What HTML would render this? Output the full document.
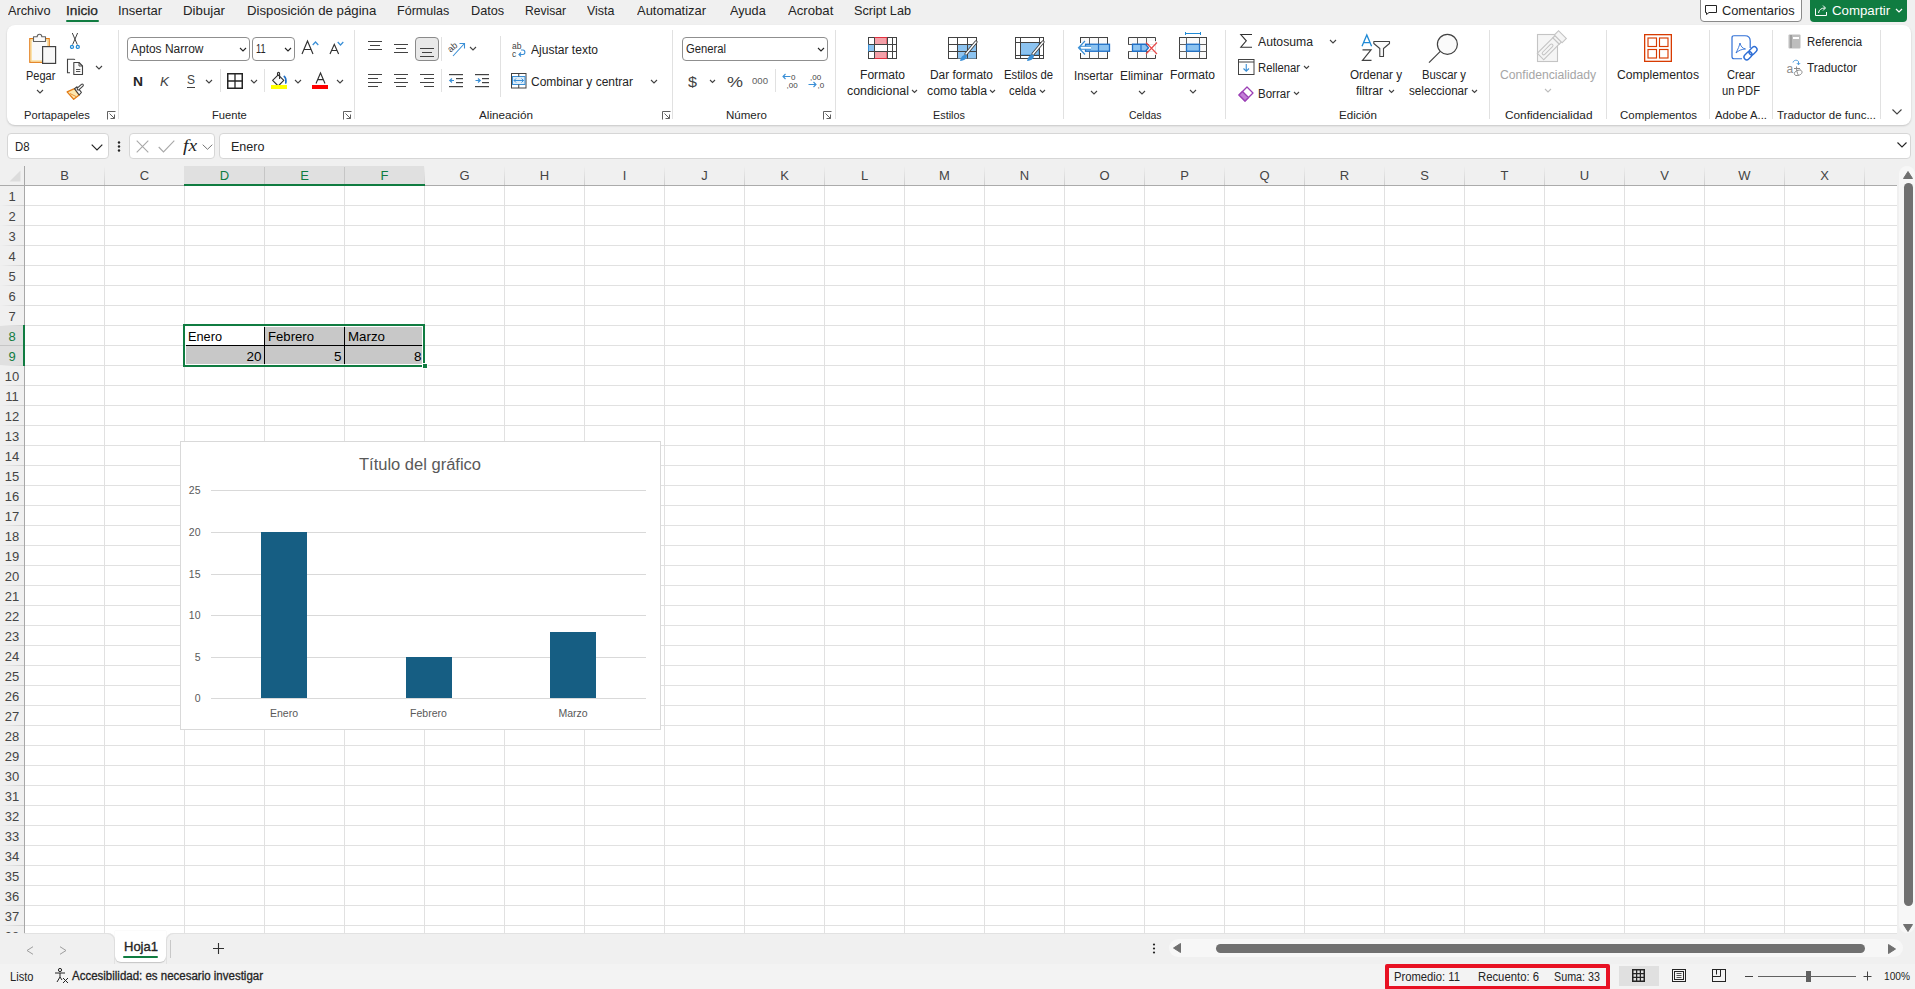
<!DOCTYPE html>
<html><head><meta charset="utf-8"><title>Excel</title>
<style>

*{margin:0;padding:0;box-sizing:border-box}
html,body{width:1915px;height:989px;overflow:hidden;background:#f0f0f0;font-family:"Liberation Sans",sans-serif;position:relative}
.t{position:absolute;white-space:nowrap;line-height:1;transform-origin:0 0}
.a{position:absolute}
svg{position:absolute;overflow:visible}

</style></head><body>
<div class="a" style="left:66px;top:20px;width:33px;height:2px;background:#107c41;border-radius:1px"></div>
<div class="a" style="left:1700px;top:-5px;width:102px;height:27px;background:#fff;border:1px solid #8a8a8a;border-radius:4px"></div>
<svg style="left:1705px;top:5px" width="12" height="10" viewBox="0 0 12 10"><path d="M0.5 0.5 H11.5 V7.5 H4 L1.5 9.5 V7.5 H0.5 Z" fill="none" stroke="#242424" stroke-width="1"/></svg>
<div class="a" style="left:1810px;top:-5px;width:97px;height:27px;background:#107c41;border-radius:4px"></div>
<svg style="left:1815px;top:4px" width="13" height="12" viewBox="0 0 13 12"><path d="M0.5 4.5 V11.5 H11.5 V8" fill="none" stroke="#fff" stroke-width="1"/><path d="M3.5 9 C4 5.5 6.5 4 10 4 M8 1.5 L10.5 4 L8 6.5" fill="none" stroke="#fff" stroke-width="1"/></svg>
<svg style="left:1895.0px;top:8.0px" width="8" height="5.0" viewBox="0 0 8 5.0"><path d="M1 1 L4.0 4.0 L7 1" fill="none" stroke="#fff" stroke-width="1.2"/></svg>
<div class="a" style="left:7px;top:25px;width:1904px;height:100px;background:#fff;border-radius:8px;box-shadow:0 1px 2px rgba(0,0,0,0.18)"></div>
<div class="a" style="left:118px;top:30px;width:1px;height:89px;background:#e1e1e1"></div>
<div class="a" style="left:354px;top:30px;width:1px;height:89px;background:#e1e1e1"></div>
<div class="a" style="left:672px;top:30px;width:1px;height:89px;background:#e1e1e1"></div>
<div class="a" style="left:835px;top:30px;width:1px;height:89px;background:#e1e1e1"></div>
<div class="a" style="left:1063px;top:30px;width:1px;height:89px;background:#e1e1e1"></div>
<div class="a" style="left:1225px;top:30px;width:1px;height:89px;background:#e1e1e1"></div>
<div class="a" style="left:1489px;top:30px;width:1px;height:89px;background:#e1e1e1"></div>
<div class="a" style="left:1606px;top:30px;width:1px;height:89px;background:#e1e1e1"></div>
<div class="a" style="left:1709px;top:30px;width:1px;height:89px;background:#e1e1e1"></div>
<div class="a" style="left:1772px;top:30px;width:1px;height:89px;background:#e1e1e1"></div>
<div class="a" style="left:1880px;top:30px;width:1px;height:89px;background:#e1e1e1"></div>
<svg style="left:107px;top:111px" width="9" height="9" viewBox="0 0 9 9"><path d="M0.5 8.5 V0.5 H8.5" fill="none" stroke="#616161" stroke-width="1"/><path d="M2.5 2.5 L7.5 7.5 M3.5 7.5 H7.5 V3.5" fill="none" stroke="#616161" stroke-width="1"/></svg>
<svg style="left:343px;top:111px" width="9" height="9" viewBox="0 0 9 9"><path d="M0.5 8.5 V0.5 H8.5" fill="none" stroke="#616161" stroke-width="1"/><path d="M2.5 2.5 L7.5 7.5 M3.5 7.5 H7.5 V3.5" fill="none" stroke="#616161" stroke-width="1"/></svg>
<svg style="left:662px;top:111px" width="9" height="9" viewBox="0 0 9 9"><path d="M0.5 8.5 V0.5 H8.5" fill="none" stroke="#616161" stroke-width="1"/><path d="M2.5 2.5 L7.5 7.5 M3.5 7.5 H7.5 V3.5" fill="none" stroke="#616161" stroke-width="1"/></svg>
<svg style="left:823px;top:111px" width="9" height="9" viewBox="0 0 9 9"><path d="M0.5 8.5 V0.5 H8.5" fill="none" stroke="#616161" stroke-width="1"/><path d="M2.5 2.5 L7.5 7.5 M3.5 7.5 H7.5 V3.5" fill="none" stroke="#616161" stroke-width="1"/></svg>
<svg style="left:28px;top:33px" width="30" height="32" viewBox="0 0 30 32">
      <rect x="1.85" y="5.65" width="19.3" height="23.6" fill="#f9f9f9" stroke="#e37c16" stroke-width="1.3"/>
      <rect x="3.1" y="6.9" width="16.8" height="21.1" fill="none" stroke="#fbd98a" stroke-width="1.2"/>
      <path d="M5.5 8.5 V3.7 H9.2 C9.2 0.4 13.8 0.4 13.8 3.7 H17.5 V8.5 Z" fill="#fafafa" stroke="#616161" stroke-width="1.1" stroke-linejoin="round"/>
      <rect x="14.6" y="13.6" width="13" height="16.8" fill="#f8f8f8" stroke="#424242" stroke-width="1.2"/>
    </svg>
<svg style="left:35.5px;top:89.0px" width="8" height="5.0" viewBox="0 0 8 5.0"><path d="M1 1 L4.0 4.0 L7 1" fill="none" stroke="#424242" stroke-width="1.1"/></svg>
<svg style="left:69px;top:32px" width="12" height="18" viewBox="0 0 12 18">
      <path d="M3.3 1 L8.3 12.6 M8.6 1 L3.6 12.6" stroke="#424242" stroke-width="1" fill="none"/>
      <circle cx="3" cy="14.9" r="1.5" fill="none" stroke="#1f8ad6" stroke-width="1.3"/>
      <circle cx="8.8" cy="14.9" r="1.5" fill="none" stroke="#1f8ad6" stroke-width="1.3"/>
    </svg>
<svg style="left:66px;top:58px" width="18" height="18" viewBox="0 0 18 18">
      <path d="M9 1.7 Q8.6 1.2 8 1.2 H1.5 V14.8 H4" fill="none" stroke="#424242" stroke-width="1.1"/>
      <path d="M7.8 4.5 H13 L16.5 8 V16.5 H7.8 Z" fill="#fafafa" stroke="#424242" stroke-width="1.1" stroke-linejoin="round"/>
      <path d="M13 4.5 V8 H16.5" fill="none" stroke="#424242" stroke-width="0.9"/>
      <path d="M10 11.5 H14.3 M10 13.5 H14.3" stroke="#424242" stroke-width="0.9"/>
    </svg>
<svg style="left:94.5px;top:65.0px" width="8" height="5.0" viewBox="0 0 8 5.0"><path d="M1 1 L4.0 4.0 L7 1" fill="none" stroke="#424242" stroke-width="1.1"/></svg>
<svg style="left:66px;top:84px" width="18" height="18" viewBox="0 0 18 18">
      <path d="M1.1 7.9 L8.5 4.7 L13.2 11 L7.7 15.3 Z" fill="#fce7b0" stroke="#e37c16" stroke-width="1.3" stroke-linejoin="round"/>
      <path d="M4 9.5 L10 12.5" stroke="#e37c16" stroke-width="0.8"/>
      <path d="M8.5 4.7 L11 2.8 L15.4 8.3 L13.2 11 Z" fill="#fafafa" stroke="#424242" stroke-width="1.1" stroke-linejoin="round"/>
      <path d="M12.3 4.8 L16.2 1.2" stroke="#424242" stroke-width="3.3" stroke-linecap="round"/>
      <path d="M12.3 4.8 L16.2 1.2" stroke="#fafafa" stroke-width="1.2" stroke-linecap="round"/>
    </svg>
<div class="a" style="left:127px;top:37px;width:123px;height:24px;background:#fff;border:1px solid #8f8f8f;border-radius:4px"></div>
<svg style="left:238.5px;top:47.0px" width="8" height="5.0" viewBox="0 0 8 5.0"><path d="M1 1 L4.0 4.0 L7 1" fill="none" stroke="#242424" stroke-width="1.1"/></svg>
<div class="a" style="left:252px;top:37px;width:43px;height:24px;background:#fff;border:1px solid #8f8f8f;border-radius:4px"></div>
<svg style="left:283.5px;top:47.0px" width="8" height="5.0" viewBox="0 0 8 5.0"><path d="M1 1 L4.0 4.0 L7 1" fill="none" stroke="#242424" stroke-width="1.1"/></svg>
<svg style="left:301px;top:40px" width="13" height="15" viewBox="0 0 13 15"><path d="M1 14 L6.5 1 L12 14 M3.2 9.5 H9.8" fill="none" stroke="#303030" stroke-width="1.15"/></svg>
<svg style="left:312px;top:41px" width="7" height="5" viewBox="0 0 7 5"><path d="M0.7 4 L3.5 1 L6.3 4" fill="none" stroke="#3a8fd6" stroke-width="1.2"/></svg>
<svg style="left:329px;top:43px" width="11" height="12" viewBox="0 0 11 12"><path d="M1 11 L5.3 1.3 L9.6 11 M2.8 7.5 H7.8" fill="none" stroke="#303030" stroke-width="1.15"/></svg>
<svg style="left:337px;top:41px" width="7" height="5" viewBox="0 0 7 5"><path d="M0.7 1 L3.5 4 L6.3 1" fill="none" stroke="#3a8fd6" stroke-width="1.2"/></svg>
<div class="a" style="left:187px;top:87px;width:8px;height:1px;background:#424242"></div>
<svg style="left:205.0px;top:78.5px" width="8" height="5.0" viewBox="0 0 8 5.0"><path d="M1 1 L4.0 4.0 L7 1" fill="none" stroke="#424242" stroke-width="1.1"/></svg>
<div class="a" style="left:220px;top:69px;width:1px;height:23px;background:#e1e1e1"></div>
<svg style="left:227px;top:73px" width="16" height="16" viewBox="0 0 16 16"><rect x="0.75" y="0.75" width="14.5" height="14.5" fill="none" stroke="#242424" stroke-width="1.5"/><path d="M8 0.5 V15.5 M0.5 8 H15.5" stroke="#242424" stroke-width="1.3"/></svg>
<svg style="left:249.5px;top:78.5px" width="8" height="5.0" viewBox="0 0 8 5.0"><path d="M1 1 L4.0 4.0 L7 1" fill="none" stroke="#424242" stroke-width="1.1"/></svg>
<div class="a" style="left:264px;top:69px;width:1px;height:23px;background:#e1e1e1"></div>
<svg style="left:271px;top:71px" width="17" height="19" viewBox="0 0 17 19">
      <path d="M1.6 9.4 L7.2 3.8 L12.8 9.4 L7.2 15 Z" fill="#fafafa" stroke="#303030" stroke-width="1.1" stroke-linejoin="round"/>
      <path d="M6.5 4.5 V2.5 C6.5 1 8.6 1 8.6 2.5 V8" fill="none" stroke="#303030" stroke-width="1.1"/>
      <path d="M13.3 5.5 C14.6 6.5 15.2 8.5 14.8 12" fill="none" stroke="#1f6fc6" stroke-width="1.7" stroke-linecap="round"/>
      <rect x="0" y="14" width="16" height="4" fill="#ffff00"/>
    </svg>
<svg style="left:294.0px;top:78.5px" width="8" height="5.0" viewBox="0 0 8 5.0"><path d="M1 1 L4.0 4.0 L7 1" fill="none" stroke="#424242" stroke-width="1.1"/></svg>
<svg style="left:315px;top:72px" width="11" height="12" viewBox="0 0 11 12"><path d="M1 11.5 L5.5 1 L10 11.5 M2.8 7.6 H8.2" fill="none" stroke="#303030" stroke-width="1.15"/></svg>
<div class="a" style="left:312px;top:85px;width:16px;height:4px;background:#ff0000"></div>
<svg style="left:336.0px;top:78.5px" width="8" height="5.0" viewBox="0 0 8 5.0"><path d="M1 1 L4.0 4.0 L7 1" fill="none" stroke="#424242" stroke-width="1.1"/></svg>
<svg style="left:368px;top:41px" width="15" height="13" viewBox="0 0 15 13"><rect x="0" y="0" width="14" height="1" fill="#424242"/><rect x="2" y="4" width="10" height="1" fill="#424242"/><rect x="0" y="8" width="14" height="1" fill="#424242"/></svg>
<svg style="left:394px;top:44px" width="15" height="13" viewBox="0 0 15 13"><rect x="0" y="0" width="14" height="1" fill="#424242"/><rect x="2" y="4" width="10" height="1" fill="#424242"/><rect x="0" y="8" width="14" height="1" fill="#424242"/></svg>
<div class="a" style="left:415px;top:37px;width:24px;height:24px;background:#e9e9e9;border:1px solid #8a8a8a;border-radius:4px"></div>
<svg style="left:420px;top:48px" width="15" height="13" viewBox="0 0 15 13"><rect x="0" y="0" width="14" height="1" fill="#424242"/><rect x="2" y="4" width="10" height="1" fill="#424242"/><rect x="0" y="8" width="14" height="1" fill="#424242"/></svg>
<div class="a" style="left:441px;top:37px;width:1px;height:24px;background:#e1e1e1"></div>
<svg style="left:448px;top:40px" width="18" height="17" viewBox="0 0 18 17">
      <text x="0" y="10" font-family="Liberation Sans" font-size="9" fill="#424242" transform="rotate(-40 5 8)">ab</text>
      <path d="M5 16 L16 4 M11.5 3.5 H16.5 V8.5" fill="none" stroke="#3a8fd6" stroke-width="1.1"/>
    </svg>
<svg style="left:468.5px;top:46.0px" width="8" height="5.0" viewBox="0 0 8 5.0"><path d="M1 1 L4.0 4.0 L7 1" fill="none" stroke="#424242" stroke-width="1.1"/></svg>
<svg style="left:368px;top:74px" width="15" height="17" viewBox="0 0 15 17"><rect x="0" y="0" width="14" height="1" fill="#424242"/><rect x="0" y="4" width="10" height="1" fill="#424242"/><rect x="0" y="8" width="14" height="1" fill="#424242"/><rect x="0" y="12" width="10" height="1" fill="#424242"/></svg>
<svg style="left:394px;top:74px" width="15" height="17" viewBox="0 0 15 17"><rect x="0" y="0" width="14" height="1" fill="#424242"/><rect x="2" y="4" width="10" height="1" fill="#424242"/><rect x="0" y="8" width="14" height="1" fill="#424242"/><rect x="2" y="12" width="10" height="1" fill="#424242"/></svg>
<svg style="left:420px;top:74px" width="15" height="17" viewBox="0 0 15 17"><rect x="0" y="0" width="14" height="1" fill="#424242"/><rect x="4" y="4" width="10" height="1" fill="#424242"/><rect x="0" y="8" width="14" height="1" fill="#424242"/><rect x="4" y="12" width="10" height="1" fill="#424242"/></svg>
<div class="a" style="left:441px;top:69px;width:1px;height:23px;background:#e1e1e1"></div>
<svg style="left:449px;top:74px" width="15" height="14" viewBox="0 0 15 14"><rect x="0" y="0" width="14" height="1.2" fill="#424242"/><rect x="7" y="4" width="7" height="1.2" fill="#424242"/><rect x="7" y="8" width="7" height="1.2" fill="#424242"/><rect x="0" y="12" width="14" height="1.2" fill="#424242"/><path d="M5 6.5 H0.8 M3 4.5 L0.8 6.5 L3 8.5" fill="none" stroke="#3a8fd6" stroke-width="1.2"/></svg>
<svg style="left:475px;top:74px" width="15" height="14" viewBox="0 0 15 14"><rect x="0" y="0" width="14" height="1.2" fill="#424242"/><rect x="7" y="4" width="7" height="1.2" fill="#424242"/><rect x="7" y="8" width="7" height="1.2" fill="#424242"/><rect x="0" y="12" width="14" height="1.2" fill="#424242"/><path d="M0.5 6.5 H5 M3 4.5 L5.2 6.5 L3 8.5" fill="none" stroke="#3a8fd6" stroke-width="1.2"/></svg>
<div class="a" style="left:500px;top:36px;width:1px;height:61px;background:#e1e1e1"></div>
<svg style="left:512px;top:42px" width="15" height="16" viewBox="0 0 15 16">
      <text x="0" y="7" font-family="Liberation Sans" font-size="8.5" fill="#424242">ab</text>
      <text x="0" y="14.5" font-family="Liberation Sans" font-size="8.5" fill="#424242">c</text>
      <path d="M7 12.5 H11 C13.5 12.5 13.5 8 11 8 H9" fill="none" stroke="#3a8fd6" stroke-width="1.1"/><path d="M9 10.5 L7 12.5 L9 14.5" fill="none" stroke="#3a8fd6" stroke-width="1.1"/>
    </svg>
<svg style="left:511px;top:73px" width="16" height="16" viewBox="0 0 16 16">
      <rect x="0.5" y="0.5" width="14.5" height="14.5" fill="#fff" stroke="#424242" stroke-width="1"/>
      <rect x="1.5" y="3.5" width="12.5" height="8" fill="#dcecf8" stroke="#3a8fd6" stroke-width="1"/>
      <path d="M7.75 0.5 V3.5 M7.75 11.5 V15" stroke="#424242" stroke-width="1"/>
      <path d="M3 7.5 H12.5 M5 5.5 L3 7.5 L5 9.5 M10.5 5.5 L12.5 7.5 L10.5 9.5" fill="none" stroke="#3a8fd6" stroke-width="1"/>
    </svg>
<svg style="left:649.5px;top:78.5px" width="8" height="5.0" viewBox="0 0 8 5.0"><path d="M1 1 L4.0 4.0 L7 1" fill="none" stroke="#424242" stroke-width="1.1"/></svg>
<div class="a" style="left:682px;top:37px;width:146px;height:24px;background:#fff;border:1px solid #8f8f8f;border-radius:4px"></div>
<svg style="left:817.0px;top:47.0px" width="8" height="5.0" viewBox="0 0 8 5.0"><path d="M1 1 L4.0 4.0 L7 1" fill="none" stroke="#242424" stroke-width="1.1"/></svg>
<svg style="left:709.0px;top:78.75px" width="7" height="4.5" viewBox="0 0 7 4.5"><path d="M1 1 L3.5 3.5 L6 1" fill="none" stroke="#424242" stroke-width="1.1"/></svg>
<div class="a" style="left:775px;top:69px;width:1px;height:23px;background:#e1e1e1"></div>
<svg style="left:782px;top:72px" width="16" height="17" viewBox="0 0 16 17">
      <text x="9" y="7.5" font-family="Liberation Sans" font-size="8" fill="#424242">0</text>
      <text x="4.5" y="15.5" font-family="Liberation Sans" font-size="8" fill="#424242">,00</text>
      <path d="M8.5 4.5 H1 M3.5 2 L1 4.5 L3.5 7" fill="none" stroke="#3a8fd6" stroke-width="1.1"/>
    </svg>
<svg style="left:808px;top:72px" width="16" height="17" viewBox="0 0 16 17">
      <text x="2" y="7.5" font-family="Liberation Sans" font-size="8" fill="#424242">,00</text>
      <text x="9.5" y="15.5" font-family="Liberation Sans" font-size="8" fill="#424242">,0</text>
      <path d="M0.5 12.5 H8 M5.5 10 L8 12.5 L5.5 15" fill="none" stroke="#3a8fd6" stroke-width="1.1"/>
    </svg>
<svg style="left:868px;top:37px" width="29" height="22" viewBox="0 0 29 22"><rect x="0.5" y="0.5" width="28" height="21" fill="#fff" stroke="#424242" stroke-width="1"/><rect x="6.5" y="0.5" width="12.5" height="7" fill="#f4a0a8" stroke="#e0303e"/><rect x="0.5" y="7.5" width="6" height="7" fill="#8cc3f0" stroke="#3a8fd6"/><rect x="6.5" y="14.5" width="12.5" height="7" fill="#f4a0a8" stroke="#e0303e"/><path d="M6.5 7.5 V14.5" stroke="#e0303e"/><path d="M6.5 0.5 V21.5" stroke="#424242" stroke-width="1"/><path d="M19.5 0.5 V21.5" stroke="#424242" stroke-width="1"/><path d="M24.5 0.5 V21.5" stroke="#424242" stroke-width="1"/><path d="M0.5 7.5 H28.5" stroke="#424242" stroke-width="1"/><path d="M0.5 14.5 H28.5" stroke="#424242" stroke-width="1"/></svg>
<svg style="left:910.5px;top:88.75px" width="7" height="4.5" viewBox="0 0 7 4.5"><path d="M1 1 L3.5 3.5 L6 1" fill="none" stroke="#424242" stroke-width="1.1"/></svg>
<svg style="left:948px;top:37px" width="29" height="22" viewBox="0 0 29 22"><rect x="0.5" y="0.5" width="28" height="21" fill="#fff" stroke="#424242" stroke-width="1"/><rect x="9.5" y="7.5" width="18.5" height="14" fill="#8cc3f0"/><path d="M9.5 0.5 V21.5" stroke="#424242" stroke-width="1"/><path d="M19.5 0.5 V21.5" stroke="#424242" stroke-width="1"/><path d="M0.5 7.5 H28.5" stroke="#424242" stroke-width="1"/><path d="M0.5 14.5 H28.5" stroke="#424242" stroke-width="1"/></svg>
<svg style="left:956px;top:41px" width="22" height="22" viewBox="0 0 22 22"><path d="M20 1 L10 13" stroke="#424242" stroke-width="3.2" stroke-linecap="round"/><path d="M20 1 L10 13" stroke="#fff" stroke-width="1.4" stroke-linecap="round"/><path d="M4 20 C5 15 8 13 10.5 14 C12 16 9 20 4 20 Z" fill="#3a8fd6"/></svg>
<svg style="left:988.5px;top:88.75px" width="7" height="4.5" viewBox="0 0 7 4.5"><path d="M1 1 L3.5 3.5 L6 1" fill="none" stroke="#424242" stroke-width="1.1"/></svg>
<svg style="left:1015px;top:37px" width="29" height="22" viewBox="0 0 29 22"><rect x="0.5" y="0.5" width="28" height="21" fill="#fff" stroke="#424242" stroke-width="1"/><rect x="5.5" y="5.5" width="18.5" height="12.5" fill="#8cc3f0" stroke="#3a8fd6"/><path d="M5.5 0.5 V21.5" stroke="#424242" stroke-width="1"/><path d="M24.5 0.5 V21.5" stroke="#424242" stroke-width="1"/><path d="M0.5 5.5 H28.5" stroke="#424242" stroke-width="1"/><path d="M0.5 18.5 H28.5" stroke="#424242" stroke-width="1"/></svg>
<svg style="left:1023px;top:41px" width="22" height="22" viewBox="0 0 22 22"><path d="M20 1 L10 13" stroke="#424242" stroke-width="3.2" stroke-linecap="round"/><path d="M20 1 L10 13" stroke="#fff" stroke-width="1.4" stroke-linecap="round"/><path d="M4 20 C5 15 8 13 10.5 14 C12 16 9 20 4 20 Z" fill="#3a8fd6"/></svg>
<svg style="left:1038.5px;top:88.75px" width="7" height="4.5" viewBox="0 0 7 4.5"><path d="M1 1 L3.5 3.5 L6 1" fill="none" stroke="#424242" stroke-width="1.1"/></svg>
<svg style="left:1077px;top:36px" width="34" height="24" viewBox="0 0 34 24">
      <rect x="3.5" y="1.5" width="27" height="21" fill="#fafafa" stroke="#424242"/>
      <path d="M12.5 1.5 V22.5 M21.5 1.5 V22.5" stroke="#616161"/>
      <rect x="3" y="7" width="5" height="10" fill="#fff"/>
      <rect x="8.5" y="8.25" width="24" height="7" fill="#8cc3f0" stroke="#1f6fc6" stroke-width="1.3"/>
      <path d="M21.5 8.5 V15" stroke="#1f6fc6" stroke-width="1.2"/>
      <path d="M14 10.25 H4 L2.5 11.75 L4 13.25 H14" fill="#fff" stroke="#3a8fd6" stroke-width="1.1"/>
      <path d="M8 5 L1.5 11.75 L8 18.5" fill="none" stroke="#3a8fd6" stroke-width="1.2"/>
    </svg>
<svg style="left:1089.5px;top:89.5px" width="8" height="5.0" viewBox="0 0 8 5.0"><path d="M1 1 L4.0 4.0 L7 1" fill="none" stroke="#424242" stroke-width="1.1"/></svg>
<svg style="left:1127px;top:36px" width="32" height="24" viewBox="0 0 32 24">
      <path d="M1.5 8 V1.5 H28.5 V22.5 H1.5 V15.5" fill="#fafafa" stroke="#424242"/>
      <path d="M10.5 1.5 V22.5 M19.5 1.5 V22.5" stroke="#616161"/>
      <path d="M1 8.5 H28.5 M1 15.5 H28.5" stroke="#616161"/>
      <rect x="0" y="9" width="5" height="6" fill="#fff"/>
      <path d="M5.5 8.25 H18.5 L21.5 11.75 L18.5 15.25 H5.5 Z" fill="#8cc3f0" stroke="#1f6fc6" stroke-width="1.3"/>
      <path d="M14 8.5 V15" stroke="#1f6fc6" stroke-width="1.2"/>
      <rect x="22" y="5" width="9" height="14" fill="#fff" opacity="0.85"/>
      <path d="M19 6.5 L30 18 M30 6.5 L19 18" stroke="#e84848" stroke-width="1.1"/>
    </svg>
<svg style="left:1137.5px;top:89.5px" width="8" height="5.0" viewBox="0 0 8 5.0"><path d="M1 1 L4.0 4.0 L7 1" fill="none" stroke="#424242" stroke-width="1.1"/></svg>
<svg style="left:1178px;top:32px" width="30" height="28" viewBox="0 0 30 28">
      <path d="M7.5 0 V3 M22.5 0 V3 M7.5 1.5 H22.5" stroke="#1f8ad6"/>
      <rect x="1.5" y="5.5" width="27" height="21" fill="#fafafa" stroke="#424242"/>
      <path d="M8.5 5.5 V26.5 M21.5 5.5 V26.5 M1.5 12.5 H28.5 M1.5 19.5 H28.5" stroke="#616161"/>
      <rect x="8.5" y="12.25" width="13" height="7" fill="#8cc3f0" stroke="#1f6fc6" stroke-width="1.3"/>
    </svg>
<svg style="left:1188.5px;top:88.5px" width="8" height="5.0" viewBox="0 0 8 5.0"><path d="M1 1 L4.0 4.0 L7 1" fill="none" stroke="#424242" stroke-width="1.1"/></svg>
<svg style="left:1239px;top:33px" width="14" height="16" viewBox="0 0 14 16"><path d="M13 1.5 H1.8 L7.3 7.8 L1.8 14.2 H13" fill="none" stroke="#303030" stroke-width="1.1"/></svg>
<svg style="left:1329.0px;top:38.5px" width="8" height="5.0" viewBox="0 0 8 5.0"><path d="M1 1 L4.0 4.0 L7 1" fill="none" stroke="#424242" stroke-width="1.1"/></svg>
<svg style="left:1238px;top:59px" width="17" height="16" viewBox="0 0 17 16"><rect x="0.5" y="0.5" width="15.5" height="15" fill="#fff" stroke="#424242" stroke-width="1"/><path d="M0.5 3 H16" stroke="#424242" stroke-width="1"/><path d="M8.25 5 V12 M5.5 9.5 L8.25 12.2 L11 9.5" fill="none" stroke="#3a8fd6" stroke-width="1.1"/></svg>
<svg style="left:1303.0px;top:65.25px" width="7" height="4.5" viewBox="0 0 7 4.5"><path d="M1 1 L3.5 3.5 L6 1" fill="none" stroke="#424242" stroke-width="1.1"/></svg>
<svg style="left:1238px;top:85px" width="16" height="17" viewBox="0 0 16 17"><path d="M1 10 L9 2 L15 8 L7 16 Z" fill="#fff" stroke="#9b3fb5" stroke-width="1.3" stroke-linejoin="round"/><path d="M1 10 L4.5 6.5 L10.5 12.5 L7 16 Z" fill="#c27fd6" stroke="#9b3fb5" stroke-width="1.3" stroke-linejoin="round"/></svg>
<svg style="left:1293.0px;top:91.25px" width="7" height="4.5" viewBox="0 0 7 4.5"><path d="M1 1 L3.5 3.5 L6 1" fill="none" stroke="#424242" stroke-width="1.1"/></svg>
<svg style="left:1361px;top:34px" width="30" height="28" viewBox="0 0 30 28">
      <path d="M1 12.3 L5.8 1 L10.6 12.3 M2.8 8.6 H8.8" fill="none" stroke="#1f8ad6" stroke-width="1.3"/>
      <path d="M1.5 15.8 H10 L1.5 26.3 H10.5" fill="none" stroke="#424242" stroke-width="1.2"/>
      <path d="M12.8 7.5 H28.5 V9.5 L22.5 14.5 V22.5 H18.8 V14.5 L12.8 9.5 Z" fill="#fafafa" stroke="#424242" stroke-width="1.1" stroke-linejoin="round"/>
    </svg>
<svg style="left:1387.5px;top:88.75px" width="7" height="4.5" viewBox="0 0 7 4.5"><path d="M1 1 L3.5 3.5 L6 1" fill="none" stroke="#424242" stroke-width="1.1"/></svg>
<svg style="left:1428px;top:33px" width="31" height="31" viewBox="0 0 31 31"><circle cx="19.4" cy="11.3" r="10" fill="#fafafa" stroke="#424242" stroke-width="1.2"/><path d="M12.3 18.4 L1 29.6" stroke="#424242" stroke-width="1.2"/></svg>
<svg style="left:1471.0px;top:88.75px" width="7" height="4.5" viewBox="0 0 7 4.5"><path d="M1 1 L3.5 3.5 L6 1" fill="none" stroke="#424242" stroke-width="1.1"/></svg>
<svg style="left:1536px;top:31px" width="30" height="32" viewBox="0 0 30 32">
      <rect x="1.5" y="3.5" width="20" height="27" fill="#f5f5f5" stroke="#c4c4c4" stroke-width="1.1"/>
      <g transform="rotate(-45 13 17)">
        <rect x="1" y="12.5" width="22" height="9" fill="#f5f5f5" stroke="#c4c4c4" stroke-width="1.1"/>
        <rect x="4" y="15.5" width="14" height="3" rx="1.5" fill="none" stroke="#c4c4c4" stroke-width="1"/>
        <rect x="23" y="12.5" width="3" height="9" fill="#f5f5f5" stroke="#c4c4c4" stroke-width="1.1"/>
        <rect x="26" y="11.5" width="6" height="11" fill="#f5f5f5" stroke="#c4c4c4" stroke-width="1.1"/>
      </g>
    </svg>
<svg style="left:1543.5px;top:87.5px" width="8" height="5.0" viewBox="0 0 8 5.0"><path d="M1 1 L4.0 4.0 L7 1" fill="none" stroke="#bdbdbd" stroke-width="1.1"/></svg>
<svg style="left:1644px;top:34px" width="29" height="29" viewBox="0 0 29 29"><rect x="0.65" y="0.65" width="26.7" height="26.7" fill="#fff" stroke="#d83b01" stroke-width="1.3"/><rect x="4" y="4" width="8.5" height="8.5" fill="none" stroke="#d83b01" stroke-width="1.15"/><rect x="15.5" y="4" width="8.5" height="8.5" fill="none" stroke="#d83b01" stroke-width="1.15"/><rect x="4" y="15.5" width="8.5" height="8.5" fill="none" stroke="#d83b01" stroke-width="1.15"/><rect x="15.5" y="15.5" width="8.5" height="8.5" fill="none" stroke="#d83b01" stroke-width="1.15"/></svg>
<svg style="left:1731px;top:35px" width="28" height="30" viewBox="0 0 28 30">
      <path d="M11 23.75 H3 Q1 23.75 1 21.75 V2.75 Q1 0.75 3 0.75 H14 Q19.2 0.75 19.2 6 V13" fill="none" stroke="#2f6fd6" stroke-width="1.2"/>
      <path d="M5 18 C7 14 8.5 10.5 9 8 C9.5 11 11.5 13.5 14.5 14 C11 14 7.5 15.5 5 18 Z" fill="none" stroke="#2f6fd6" stroke-width="0.9"/>
      <rect x="12.5" y="18" width="9" height="5.5" rx="2.75" transform="rotate(-45 17 20.75)" fill="#fff" stroke="#2f6fd6" stroke-width="1.4"/>
      <rect x="17.5" y="13" width="9" height="5.5" rx="2.75" transform="rotate(-45 22 15.75)" fill="none" stroke="#2f6fd6" stroke-width="1.4"/>
    </svg>
<svg style="left:1788px;top:34px" width="14" height="15" viewBox="0 0 14 15"><rect x="0.5" y="0.5" width="12" height="14" rx="1" fill="#bdbdbd"/><rect x="2" y="1" width="2" height="13" fill="#9e9e9e"/><rect x="5" y="3" width="6" height="2" fill="#fff"/></svg>
<svg style="left:1786px;top:58px" width="18" height="19" viewBox="0 0 18 19">
      <text x="0.5" y="15" font-family="Liberation Sans" font-size="12" fill="#8a8a8a">a</text>
      <path d="M8 10.5 H14 M10.5 8.5 C10.5 12 11 15 12.5 17.5 M14.5 12 C11 12 7.5 14 8.5 16.5 C9.5 18.5 15.5 17.5 16 14.5 C16.2 13 15 12 14 12" fill="none" stroke="#8a8a8a" stroke-width="1"/>
      <path d="M7 4.5 C7.5 2 11 1.5 12.5 3.5 V6.5 M10.8 5 L12.5 6.8 L14.2 5" fill="none" stroke="#3a8fd6" stroke-width="0.9"/>
    </svg>
<svg style="left:1891.5px;top:108.5px" width="10" height="6" viewBox="0 0 10 6"><path d="M0.5 0.5 L5 5 L9.5 0.5" fill="none" stroke="#424242" stroke-width="1.1"/></svg>
<div class="a" style="left:7px;top:133px;width:102px;height:26px;background:#fff;border:1px solid #d6d6d6;border-radius:4px"></div>
<svg style="left:91px;top:144px" width="12" height="7" viewBox="0 0 12 7"><path d="M0.7 0.7 L6 6 L11.3 0.7" fill="none" stroke="#242424" stroke-width="1.2"/></svg>
<svg style="left:117px;top:141px" width="4" height="11" viewBox="0 0 4 11"><circle cx="2" cy="1.5" r="1.2" fill="#242424"/><circle cx="2" cy="5.5" r="1.2" fill="#242424"/><circle cx="2" cy="9.5" r="1.2" fill="#242424"/></svg>
<div class="a" style="left:129px;top:133px;width:86px;height:26px;background:#fff;border:1px solid #d6d6d6;border-radius:4px"></div>
<svg style="left:136px;top:140px" width="13" height="13" viewBox="0 0 13 13"><path d="M0.7 0.7 L12.3 12.3 M12.3 0.7 L0.7 12.3" stroke="#a8a8a8" stroke-width="1.1"/></svg>
<svg style="left:158px;top:140px" width="17" height="13" viewBox="0 0 17 13"><path d="M0.7 7 L5.5 12 L16.3 0.7" fill="none" stroke="#a8a8a8" stroke-width="1.1"/></svg>
<svg style="left:202px;top:144px" width="11" height="6" viewBox="0 0 11 6"><path d="M0.7 0.7 L5.5 5.3 L10.3 0.7" fill="none" stroke="#757575" stroke-width="1"/></svg>
<div class="a" style="left:219px;top:133px;width:1692px;height:26px;background:#fff;border:1px solid #d6d6d6;border-radius:4px"></div>
<svg style="left:1896.5px;top:141.5px" width="10" height="6" viewBox="0 0 10 6"><path d="M0.5 0.5 L5 5 L9.5 0.5" fill="none" stroke="#242424" stroke-width="1.1"/></svg>
<div class="a" style="left:0px;top:166px;width:1897px;height:20px;background:#f0f0f0"></div>
<div class="a" style="left:25px;top:186px;width:1872px;height:747px;background:#fff"></div>
<svg style="left:0;top:0" width="1915" height="989"><defs><linearGradient id="gv" x1="0" y1="0" x2="0" y2="1"><stop offset="0" stop-color="#f0f0f0"/><stop offset="1" stop-color="#cfcfcf"/></linearGradient><linearGradient id="gh" x1="0" y1="0" x2="1" y2="0"><stop offset="0" stop-color="#f0f0f0"/><stop offset="1" stop-color="#cfcfcf"/></linearGradient></defs><rect x="104" y="186" width="1" height="747" fill="#e1e1e1"/><rect x="104" y="166" width="1" height="19" fill="url(#gv)"/><rect x="184" y="186" width="1" height="747" fill="#e1e1e1"/><rect x="184" y="166" width="1" height="19" fill="url(#gv)"/><rect x="264" y="186" width="1" height="747" fill="#e1e1e1"/><rect x="264" y="166" width="1" height="19" fill="url(#gv)"/><rect x="344" y="186" width="1" height="747" fill="#e1e1e1"/><rect x="344" y="166" width="1" height="19" fill="url(#gv)"/><rect x="424" y="186" width="1" height="747" fill="#e1e1e1"/><rect x="424" y="166" width="1" height="19" fill="url(#gv)"/><rect x="504" y="186" width="1" height="747" fill="#e1e1e1"/><rect x="504" y="166" width="1" height="19" fill="url(#gv)"/><rect x="584" y="186" width="1" height="747" fill="#e1e1e1"/><rect x="584" y="166" width="1" height="19" fill="url(#gv)"/><rect x="664" y="186" width="1" height="747" fill="#e1e1e1"/><rect x="664" y="166" width="1" height="19" fill="url(#gv)"/><rect x="744" y="186" width="1" height="747" fill="#e1e1e1"/><rect x="744" y="166" width="1" height="19" fill="url(#gv)"/><rect x="824" y="186" width="1" height="747" fill="#e1e1e1"/><rect x="824" y="166" width="1" height="19" fill="url(#gv)"/><rect x="904" y="186" width="1" height="747" fill="#e1e1e1"/><rect x="904" y="166" width="1" height="19" fill="url(#gv)"/><rect x="984" y="186" width="1" height="747" fill="#e1e1e1"/><rect x="984" y="166" width="1" height="19" fill="url(#gv)"/><rect x="1064" y="186" width="1" height="747" fill="#e1e1e1"/><rect x="1064" y="166" width="1" height="19" fill="url(#gv)"/><rect x="1144" y="186" width="1" height="747" fill="#e1e1e1"/><rect x="1144" y="166" width="1" height="19" fill="url(#gv)"/><rect x="1224" y="186" width="1" height="747" fill="#e1e1e1"/><rect x="1224" y="166" width="1" height="19" fill="url(#gv)"/><rect x="1304" y="186" width="1" height="747" fill="#e1e1e1"/><rect x="1304" y="166" width="1" height="19" fill="url(#gv)"/><rect x="1384" y="186" width="1" height="747" fill="#e1e1e1"/><rect x="1384" y="166" width="1" height="19" fill="url(#gv)"/><rect x="1464" y="186" width="1" height="747" fill="#e1e1e1"/><rect x="1464" y="166" width="1" height="19" fill="url(#gv)"/><rect x="1544" y="186" width="1" height="747" fill="#e1e1e1"/><rect x="1544" y="166" width="1" height="19" fill="url(#gv)"/><rect x="1624" y="186" width="1" height="747" fill="#e1e1e1"/><rect x="1624" y="166" width="1" height="19" fill="url(#gv)"/><rect x="1704" y="186" width="1" height="747" fill="#e1e1e1"/><rect x="1704" y="166" width="1" height="19" fill="url(#gv)"/><rect x="1784" y="186" width="1" height="747" fill="#e1e1e1"/><rect x="1784" y="166" width="1" height="19" fill="url(#gv)"/><rect x="1864" y="186" width="1" height="747" fill="#e1e1e1"/><rect x="1864" y="166" width="1" height="19" fill="url(#gv)"/><rect x="25" y="205" width="1872" height="1" fill="#e1e1e1"/><rect x="0" y="205" width="24" height="1" fill="url(#gh)"/><rect x="25" y="225" width="1872" height="1" fill="#e1e1e1"/><rect x="0" y="225" width="24" height="1" fill="url(#gh)"/><rect x="25" y="245" width="1872" height="1" fill="#e1e1e1"/><rect x="0" y="245" width="24" height="1" fill="url(#gh)"/><rect x="25" y="265" width="1872" height="1" fill="#e1e1e1"/><rect x="0" y="265" width="24" height="1" fill="url(#gh)"/><rect x="25" y="285" width="1872" height="1" fill="#e1e1e1"/><rect x="0" y="285" width="24" height="1" fill="url(#gh)"/><rect x="25" y="305" width="1872" height="1" fill="#e1e1e1"/><rect x="0" y="305" width="24" height="1" fill="url(#gh)"/><rect x="25" y="325" width="1872" height="1" fill="#e1e1e1"/><rect x="0" y="325" width="24" height="1" fill="url(#gh)"/><rect x="25" y="345" width="1872" height="1" fill="#e1e1e1"/><rect x="0" y="345" width="24" height="1" fill="url(#gh)"/><rect x="25" y="365" width="1872" height="1" fill="#e1e1e1"/><rect x="0" y="365" width="24" height="1" fill="url(#gh)"/><rect x="25" y="385" width="1872" height="1" fill="#e1e1e1"/><rect x="0" y="385" width="24" height="1" fill="url(#gh)"/><rect x="25" y="405" width="1872" height="1" fill="#e1e1e1"/><rect x="0" y="405" width="24" height="1" fill="url(#gh)"/><rect x="25" y="425" width="1872" height="1" fill="#e1e1e1"/><rect x="0" y="425" width="24" height="1" fill="url(#gh)"/><rect x="25" y="445" width="1872" height="1" fill="#e1e1e1"/><rect x="0" y="445" width="24" height="1" fill="url(#gh)"/><rect x="25" y="465" width="1872" height="1" fill="#e1e1e1"/><rect x="0" y="465" width="24" height="1" fill="url(#gh)"/><rect x="25" y="485" width="1872" height="1" fill="#e1e1e1"/><rect x="0" y="485" width="24" height="1" fill="url(#gh)"/><rect x="25" y="505" width="1872" height="1" fill="#e1e1e1"/><rect x="0" y="505" width="24" height="1" fill="url(#gh)"/><rect x="25" y="525" width="1872" height="1" fill="#e1e1e1"/><rect x="0" y="525" width="24" height="1" fill="url(#gh)"/><rect x="25" y="545" width="1872" height="1" fill="#e1e1e1"/><rect x="0" y="545" width="24" height="1" fill="url(#gh)"/><rect x="25" y="565" width="1872" height="1" fill="#e1e1e1"/><rect x="0" y="565" width="24" height="1" fill="url(#gh)"/><rect x="25" y="585" width="1872" height="1" fill="#e1e1e1"/><rect x="0" y="585" width="24" height="1" fill="url(#gh)"/><rect x="25" y="605" width="1872" height="1" fill="#e1e1e1"/><rect x="0" y="605" width="24" height="1" fill="url(#gh)"/><rect x="25" y="625" width="1872" height="1" fill="#e1e1e1"/><rect x="0" y="625" width="24" height="1" fill="url(#gh)"/><rect x="25" y="645" width="1872" height="1" fill="#e1e1e1"/><rect x="0" y="645" width="24" height="1" fill="url(#gh)"/><rect x="25" y="665" width="1872" height="1" fill="#e1e1e1"/><rect x="0" y="665" width="24" height="1" fill="url(#gh)"/><rect x="25" y="685" width="1872" height="1" fill="#e1e1e1"/><rect x="0" y="685" width="24" height="1" fill="url(#gh)"/><rect x="25" y="705" width="1872" height="1" fill="#e1e1e1"/><rect x="0" y="705" width="24" height="1" fill="url(#gh)"/><rect x="25" y="725" width="1872" height="1" fill="#e1e1e1"/><rect x="0" y="725" width="24" height="1" fill="url(#gh)"/><rect x="25" y="745" width="1872" height="1" fill="#e1e1e1"/><rect x="0" y="745" width="24" height="1" fill="url(#gh)"/><rect x="25" y="765" width="1872" height="1" fill="#e1e1e1"/><rect x="0" y="765" width="24" height="1" fill="url(#gh)"/><rect x="25" y="785" width="1872" height="1" fill="#e1e1e1"/><rect x="0" y="785" width="24" height="1" fill="url(#gh)"/><rect x="25" y="805" width="1872" height="1" fill="#e1e1e1"/><rect x="0" y="805" width="24" height="1" fill="url(#gh)"/><rect x="25" y="825" width="1872" height="1" fill="#e1e1e1"/><rect x="0" y="825" width="24" height="1" fill="url(#gh)"/><rect x="25" y="845" width="1872" height="1" fill="#e1e1e1"/><rect x="0" y="845" width="24" height="1" fill="url(#gh)"/><rect x="25" y="865" width="1872" height="1" fill="#e1e1e1"/><rect x="0" y="865" width="24" height="1" fill="url(#gh)"/><rect x="25" y="885" width="1872" height="1" fill="#e1e1e1"/><rect x="0" y="885" width="24" height="1" fill="url(#gh)"/><rect x="25" y="905" width="1872" height="1" fill="#e1e1e1"/><rect x="0" y="905" width="24" height="1" fill="url(#gh)"/><rect x="25" y="925" width="1872" height="1" fill="#e1e1e1"/><rect x="0" y="925" width="24" height="1" fill="url(#gh)"/></svg>
<div class="a" style="left:24px;top:166px;width:1px;height:767px;background:#a8a8a8"></div>
<div class="a" style="left:0px;top:185px;width:1897px;height:1px;background:#ababab"></div>
<svg style="left:9px;top:170px" width="12" height="12" viewBox="0 0 12 12"><path d="M11.5 0.5 V11.5 H0.5 Z" fill="#dcdcdc"/></svg>
<div class="a" style="left:184px;top:166px;width:240px;height:19px;background:#e0e0e0"></div>
<div class="a" style="left:264px;top:167px;width:1px;height:18px;background:#c6c6c6"></div>
<div class="a" style="left:344px;top:167px;width:1px;height:18px;background:#c6c6c6"></div>
<div class="a" style="left:184px;top:184px;width:241px;height:2px;background:#107c41"></div>
<div class="a" style="left:0px;top:326px;width:23px;height:39px;background:#e0e0e0"></div>
<div class="a" style="left:0px;top:345px;width:23px;height:1px;background:#c6c6c6"></div>
<div class="a" style="left:23px;top:325px;width:2px;height:41px;background:#107c41"></div>
<div class="a" style="left:0;top:926px;width:24px;height:7px;overflow:hidden"><div class="t" style="left:4.7px;top:3.5px;font-size:13px;color:#444">38</div></div>
<div class="a" style="left:265px;top:327px;width:157px;height:18px;background:#c8c8c8"></div>
<div class="a" style="left:186px;top:346px;width:236px;height:18px;background:#c8c8c8"></div>
<div class="a" style="left:186px;top:345px;width:236px;height:1px;background:#000"></div>
<div class="a" style="left:264px;top:327px;width:1px;height:37px;background:#000"></div>
<div class="a" style="left:344px;top:327px;width:1px;height:37px;background:#000"></div>
<div class="a" style="left:183px;top:324px;width:242px;height:43px;border:2px solid #107c41"></div>
<div class="a" style="left:422px;top:363px;width:6px;height:6px;background:#107c41;border:1px solid #fff"></div>
<div class="a" style="left:1899px;top:166px;width:16px;height:767px;background:#f7f7f7;border-radius:8px"></div>
<svg style="left:1903px;top:171px" width="10" height="8" viewBox="0 0 10 8"><path d="M5 0.5 L9.5 7.5 H0.5 Z" fill="#707070" stroke="#707070" stroke-linejoin="round"/></svg>
<div class="a" style="left:1904px;top:183px;width:9px;height:723px;background:#707070;border-radius:5px"></div>
<svg style="left:1903px;top:924px" width="10" height="8" viewBox="0 0 10 8"><path d="M5 7.5 L9.5 0.5 H0.5 Z" fill="#707070" stroke="#707070" stroke-linejoin="round"/></svg>
<div class="a" style="left:180px;top:441px;width:481px;height:289px;background:#fff;border:1px solid #d9d9d9"></div>
<div class="a" style="left:211px;top:698px;width:435px;height:1px;background:#d9d9d9"></div>
<div class="a" style="left:211px;top:657px;width:435px;height:1px;background:#d9d9d9"></div>
<div class="a" style="left:211px;top:615px;width:435px;height:1px;background:#d9d9d9"></div>
<div class="a" style="left:211px;top:574px;width:435px;height:1px;background:#d9d9d9"></div>
<div class="a" style="left:211px;top:532px;width:435px;height:1px;background:#d9d9d9"></div>
<div class="a" style="left:211px;top:490px;width:435px;height:1px;background:#d9d9d9"></div>
<div class="a" style="left:261px;top:532px;width:46px;height:166px;background:#165e83"></div>
<div class="a" style="left:406px;top:657px;width:46px;height:41px;background:#165e83"></div>
<div class="a" style="left:550px;top:632px;width:46px;height:66px;background:#165e83"></div>
<div class="a" style="left:100px;top:933px;width:80px;height:8px;background:#fff"></div>
<div class="a" style="left:0px;top:933px;width:115px;height:31px;background:#f0f0f0;border-top-right-radius:7px;box-shadow:inset -1px 1px 0 #e2e2e2"></div>
<div class="a" style="left:166px;top:933px;width:1749px;height:31px;background:#f0f0f0;border-top-left-radius:7px;box-shadow:inset 1px 1px 0 #e2e2e2"></div>
<div class="a" style="left:0px;top:933px;width:24px;height:31px;background:#f0f0f0"></div>
<div class="a" style="left:1897px;top:933px;width:18px;height:31px;background:#f0f0f0"></div>
<svg style="left:26px;top:946px" width="8" height="9" viewBox="0 0 8 9"><path d="M7 0.7 L1 4.5 L7 8.3" fill="none" stroke="#9e9e9e" stroke-width="1"/></svg>
<svg style="left:59px;top:946px" width="8" height="9" viewBox="0 0 8 9"><path d="M1 0.7 L7 4.5 L1 8.3" fill="none" stroke="#9e9e9e" stroke-width="1"/></svg>
<div class="a" style="left:115px;top:931px;width:51px;height:31px;background:#fff;border-radius:0 0 6px 6px;box-shadow:0 0.5px 1px rgba(0,0,0,0.18)"></div>
<div class="a" style="left:123px;top:956px;width:35px;height:2px;background:#107c41;border-radius:1px"></div>
<div class="a" style="left:170px;top:940px;width:1px;height:18px;background:#c8c8c8"></div>
<svg style="left:213px;top:943px" width="11" height="11" viewBox="0 0 11 11"><path d="M5.5 0 V11 M0 5.5 H11" stroke="#303030" stroke-width="1.1"/></svg>
<svg style="left:1152px;top:943px" width="4" height="11" viewBox="0 0 4 11"><circle cx="2" cy="1.5" r="1.1" fill="#242424"/><circle cx="2" cy="5.5" r="1.1" fill="#242424"/><circle cx="2" cy="9.5" r="1.1" fill="#242424"/></svg>
<div class="a" style="left:1169px;top:939px;width:734px;height:18px;background:#f7f7f7;border-radius:9px"></div>
<svg style="left:1173px;top:943px" width="8" height="10" viewBox="0 0 8 10"><path d="M7.5 0.5 V9.5 L0.5 5 Z" fill="#707070" stroke="#707070" stroke-linejoin="round"/></svg>
<div class="a" style="left:1216px;top:944px;width:649px;height:9px;background:#707070;border-radius:5px"></div>
<svg style="left:1888px;top:944px" width="8" height="10" viewBox="0 0 8 10"><path d="M0.5 0.5 V9.5 L7.5 5 Z" fill="#707070" stroke="#707070" stroke-linejoin="round"/></svg>
<div class="a" style="left:0px;top:964px;width:1915px;height:25px;background:#f3f3f3"></div>
<svg style="left:54px;top:968px" width="15" height="15" viewBox="0 0 15 15"><circle cx="6" cy="2" r="1.6" fill="none" stroke="#242424" stroke-width="1"/><path d="M1 5 H11 M6 5 V9 L3 14 M6 9 L8 12" fill="none" stroke="#242424" stroke-width="1"/><path d="M9 10 L14 15 M14 10 L9 15" stroke="#242424" stroke-width="1"/></svg>
<div class="a" style="left:1385px;top:964px;width:225px;height:26px;border:4px solid #e81123;border-radius:2px"></div>
<div class="a" style="left:1619px;top:966px;width:40px;height:20px;background:#e0e0e0"></div>
<svg style="left:1632px;top:969px" width="13" height="13" viewBox="0 0 13 13"><rect x="0" y="0" width="13" height="13" fill="#242424"/><rect x="1.5" y="1.5" width="2.5" height="2.5" fill="#e0e0e0"/><rect x="5.25" y="1.5" width="2.5" height="2.5" fill="#e0e0e0"/><rect x="9" y="1.5" width="2.5" height="2.5" fill="#e0e0e0"/><rect x="1.5" y="5.25" width="2.5" height="2.5" fill="#e0e0e0"/><rect x="5.25" y="5.25" width="2.5" height="2.5" fill="#e0e0e0"/><rect x="9" y="5.25" width="2.5" height="2.5" fill="#e0e0e0"/><rect x="1.5" y="9" width="2.5" height="2.5" fill="#e0e0e0"/><rect x="5.25" y="9" width="2.5" height="2.5" fill="#e0e0e0"/><rect x="9" y="9" width="2.5" height="2.5" fill="#e0e0e0"/></svg>
<svg style="left:1672px;top:969px" width="14" height="13" viewBox="0 0 14 13"><rect x="0.5" y="0.5" width="13" height="12" fill="none" stroke="#242424"/><rect x="2.5" y="2.5" width="9" height="8" fill="none" stroke="#242424"/><path d="M4.5 4.5 H9.5 M4.5 6.5 H9.5 M4.5 8.5 H9.5" stroke="#424242" stroke-width="0.9"/></svg>
<svg style="left:1712px;top:969px" width="14" height="13" viewBox="0 0 14 13"><rect x="0.5" y="0.5" width="13" height="12" fill="none" stroke="#242424"/><path d="M4.5 0.5 V5.5 M8.5 0.5 V7.5 H0.5" fill="none" stroke="#242424"/></svg>
<div class="a" style="left:1745px;top:976px;width:8px;height:1px;background:#424242"></div>
<div class="a" style="left:1758px;top:976px;width:98px;height:1px;background:#616161"></div>
<div class="a" style="left:1806px;top:971px;width:5px;height:11px;background:#616161"></div>
<svg style="left:1862px;top:971px" width="10" height="10" viewBox="0 0 10 10"><path d="M5.5 0.5 V9.5 M1.5 5.5 H9.5" stroke="#424242" stroke-width="1"/></svg>
<div class="t" id="t0" style="left:8.00px;top:4.20px;font-size:13px;color:#242424;transform:scaleX(0.9802);">Archivo</div>
<div class="t" id="t1" style="left:66.00px;top:4.20px;font-size:13px;color:#242424;transform:scaleX(1.0540);-webkit-text-stroke:0.25px #242424;">Inicio</div>
<div class="t" id="t2" style="left:118.00px;top:4.20px;font-size:13px;color:#242424;">Insertar</div>
<div class="t" id="t3" style="left:183.00px;top:4.20px;font-size:13px;color:#242424;transform:scaleX(1.0197);">Dibujar</div>
<div class="t" id="t4" style="left:246.50px;top:4.20px;font-size:13px;color:#242424;transform:scaleX(1.0165);">Disposición de página</div>
<div class="t" id="t5" style="left:397.40px;top:4.20px;font-size:13px;color:#242424;transform:scaleX(0.9652);">Fórmulas</div>
<div class="t" id="t6" style="left:471.40px;top:4.20px;font-size:13px;color:#242424;transform:scaleX(0.9774);">Datos</div>
<div class="t" id="t7" style="left:525.20px;top:4.20px;font-size:13px;color:#242424;transform:scaleX(0.9324);">Revisar</div>
<div class="t" id="t8" style="left:587.20px;top:4.20px;font-size:13px;color:#242424;transform:scaleX(0.9556);">Vista</div>
<div class="t" id="t9" style="left:637.30px;top:4.20px;font-size:13px;color:#242424;transform:scaleX(0.9960);">Automatizar</div>
<div class="t" id="t10" style="left:729.80px;top:4.20px;font-size:13px;color:#242424;transform:scaleX(0.9743);">Ayuda</div>
<div class="t" id="t11" style="left:788.30px;top:4.20px;font-size:13px;color:#242424;transform:scaleX(1.0109);">Acrobat</div>
<div class="t" id="t12" style="left:854.00px;top:4.20px;font-size:13px;color:#242424;transform:scaleX(0.9736);">Script Lab</div>
<div class="t" id="t13" style="left:1721.70px;top:4.00px;font-size:13px;color:#242424;transform:scaleX(0.9850);">Comentarios</div>
<div class="t" id="t14" style="left:1831.60px;top:4.00px;font-size:13px;color:#ffffff;transform:scaleX(1.0197);">Compartir</div>
<div class="t" id="t15" style="left:23.60px;top:109.57px;font-size:11.5px;color:#242424;transform:scaleX(0.9722);">Portapapeles</div>
<div class="t" id="t16" style="left:211.50px;top:109.57px;font-size:11.5px;color:#242424;transform:scaleX(0.9717);">Fuente</div>
<div class="t" id="t17" style="left:479.00px;top:109.57px;font-size:11.5px;color:#242424;transform:scaleX(1.0174);">Alineación</div>
<div class="t" id="t18" style="left:725.50px;top:109.57px;font-size:11.5px;color:#242424;transform:scaleX(1.0023);">Número</div>
<div class="t" id="t19" style="left:933.00px;top:109.57px;font-size:11.5px;color:#242424;transform:scaleX(0.9446);">Estilos</div>
<div class="t" id="t20" style="left:1129.00px;top:109.57px;font-size:11.5px;color:#242424;transform:scaleX(0.9075);">Celdas</div>
<div class="t" id="t21" style="left:1339.00px;top:109.57px;font-size:11.5px;color:#242424;transform:scaleX(1.0075);">Edición</div>
<div class="t" id="t22" style="left:1504.50px;top:109.57px;font-size:11.5px;color:#242424;transform:scaleX(1.0288);">Confidencialidad</div>
<div class="t" id="t23" style="left:1620.00px;top:109.57px;font-size:11.5px;color:#242424;transform:scaleX(0.9956);">Complementos</div>
<div class="t" id="t24" style="left:1715.00px;top:109.57px;font-size:11.5px;color:#242424;transform:scaleX(0.9797);">Adobe A...</div>
<div class="t" id="t25" style="left:1777.00px;top:109.57px;font-size:11.5px;color:#242424;transform:scaleX(0.9970);">Traductor de func...</div>
<div class="t" id="t26" style="left:25.70px;top:69.84px;font-size:12px;color:#242424;transform:scaleX(0.9147);">Pegar</div>
<div class="t" id="t27" style="left:130.50px;top:43.34px;font-size:12px;color:#242424;transform:scaleX(0.9972);">Aptos Narrow</div>
<div class="t" id="t28" style="left:255.50px;top:43.34px;font-size:12px;color:#242424;transform:scaleX(0.7619);">11</div>
<div class="t" id="t29" style="left:133.00px;top:74.50px;font-size:13px;color:#242424;font-weight:bold;transform:scaleX(1.0649);">N</div>
<div class="t" id="t30" style="left:160.00px;top:74.50px;font-size:13px;color:#424242;transform:scaleX(1.0378);font-style:italic;">K</div>
<div class="t" id="t31" style="left:187.00px;top:74.42px;font-size:12.5px;color:#424242;transform:scaleX(0.9588);">S</div>
<div class="t" id="t32" style="left:531.00px;top:43.84px;font-size:12px;color:#242424;transform:scaleX(1.0045);">Ajustar texto</div>
<div class="t" id="t33" style="left:531.00px;top:75.84px;font-size:12px;color:#242424;">Combinar y centrar</div>
<div class="t" id="t34" style="left:685.50px;top:43.34px;font-size:12px;color:#242424;transform:scaleX(0.9367);">General</div>
<div class="t" id="t35" style="left:688.00px;top:73.80px;font-size:15px;color:#424242;transform:scaleX(1.0787);">$</div>
<div class="t" id="t36" style="left:727.00px;top:73.80px;font-size:15px;color:#424242;transform:scaleX(1.1991);">%</div>
<div class="t" id="t37" style="left:752.00px;top:76.88px;font-size:9px;color:#616161;transform:scaleX(1.0644);">000</div>
<div class="t" id="t38" style="left:860.00px;top:68.84px;font-size:12px;color:#242424;transform:scaleX(1.0070);">Formato</div>
<div class="t" id="t39" style="left:847.00px;top:84.84px;font-size:12px;color:#242424;transform:scaleX(1.0325);">condicional</div>
<div class="t" id="t40" style="left:930.00px;top:68.84px;font-size:12px;color:#242424;transform:scaleX(0.9943);">Dar formato</div>
<div class="t" id="t41" style="left:927.00px;top:84.84px;font-size:12px;color:#242424;transform:scaleX(1.0221);">como tabla</div>
<div class="t" id="t42" style="left:1004.00px;top:68.84px;font-size:12px;color:#242424;transform:scaleX(0.9417);">Estilos de</div>
<div class="t" id="t43" style="left:1009.00px;top:84.84px;font-size:12px;color:#242424;transform:scaleX(0.9412);">celda</div>
<div class="t" id="t44" style="left:1074.00px;top:69.84px;font-size:12px;color:#242424;transform:scaleX(0.9585);">Insertar</div>
<div class="t" id="t45" style="left:1120.00px;top:69.84px;font-size:12px;color:#242424;transform:scaleX(0.9921);">Eliminar</div>
<div class="t" id="t46" style="left:1170.00px;top:69.34px;font-size:12px;color:#242424;transform:scaleX(1.0070);">Formato</div>
<div class="t" id="t47" style="left:1258.00px;top:35.84px;font-size:12px;color:#242424;transform:scaleX(1.0179);">Autosuma</div>
<div class="t" id="t48" style="left:1258.00px;top:61.84px;font-size:12px;color:#242424;transform:scaleX(0.9395);">Rellenar</div>
<div class="t" id="t49" style="left:1258.00px;top:87.84px;font-size:12px;color:#242424;transform:scaleX(0.9597);">Borrar</div>
<div class="t" id="t50" style="left:1350.00px;top:69.34px;font-size:12px;color:#242424;transform:scaleX(0.9745);">Ordenar y</div>
<div class="t" id="t51" style="left:1356.00px;top:84.84px;font-size:12px;color:#242424;transform:scaleX(1.0123);">filtrar</div>
<div class="t" id="t52" style="left:1422.00px;top:69.34px;font-size:12px;color:#242424;transform:scaleX(0.9424);">Buscar y</div>
<div class="t" id="t53" style="left:1409.00px;top:84.84px;font-size:12px;color:#242424;transform:scaleX(0.9719);">seleccionar</div>
<div class="t" id="t54" style="left:1500.00px;top:69.34px;font-size:12px;color:#a6a6a6;transform:scaleX(1.0134);">Confidencialidady</div>
<div class="t" id="t55" style="left:1617.00px;top:69.34px;font-size:12px;color:#242424;transform:scaleX(1.0161);">Complementos</div>
<div class="t" id="t56" style="left:1727.00px;top:69.34px;font-size:12px;color:#242424;transform:scaleX(0.9328);">Crear</div>
<div class="t" id="t57" style="left:1722.00px;top:84.84px;font-size:12px;color:#242424;transform:scaleX(0.9339);">un PDF</div>
<div class="t" id="t58" style="left:1807.00px;top:35.84px;font-size:12px;color:#242424;transform:scaleX(0.9478);">Referencia</div>
<div class="t" id="t59" style="left:1807.00px;top:61.84px;font-size:12px;color:#242424;transform:scaleX(0.9822);">Traductor</div>
<div class="t" id="t60" style="left:14.70px;top:139.50px;font-size:13px;color:#242424;transform:scaleX(0.8782);">D8</div>
<div class="t" id="t61" style="left:183.00px;top:137.96px;font-size:16px;color:#242424;transform:scaleX(1.2124);font-family:'Liberation Serif',serif;font-style:italic;">fx</div>
<div class="t" id="t62" style="left:230.50px;top:139.50px;font-size:13px;color:#242424;transform:scaleX(0.9653);">Enero</div>
<div class="t" id="t63" style="left:64.50px;top:169.00px;font-size:13px;color:#444444;transform-origin:50% 0;transform:translateX(-50%);">B</div>
<div class="t" id="t64" style="left:144.50px;top:169.00px;font-size:13px;color:#444444;transform-origin:50% 0;transform:translateX(-50%);">C</div>
<div class="t" id="t65" style="left:224.50px;top:169.00px;font-size:13px;color:#107c41;transform-origin:50% 0;transform:translateX(-50%);">D</div>
<div class="t" id="t66" style="left:304.50px;top:169.00px;font-size:13px;color:#107c41;transform-origin:50% 0;transform:translateX(-50%);">E</div>
<div class="t" id="t67" style="left:384.50px;top:169.00px;font-size:13px;color:#107c41;transform-origin:50% 0;transform:translateX(-50%);">F</div>
<div class="t" id="t68" style="left:464.50px;top:169.00px;font-size:13px;color:#444444;transform-origin:50% 0;transform:translateX(-50%);">G</div>
<div class="t" id="t69" style="left:544.50px;top:169.00px;font-size:13px;color:#444444;transform-origin:50% 0;transform:translateX(-50%);">H</div>
<div class="t" id="t70" style="left:624.50px;top:169.00px;font-size:13px;color:#444444;transform-origin:50% 0;transform:translateX(-50%);">I</div>
<div class="t" id="t71" style="left:704.50px;top:169.00px;font-size:13px;color:#444444;transform-origin:50% 0;transform:translateX(-50%);">J</div>
<div class="t" id="t72" style="left:784.50px;top:169.00px;font-size:13px;color:#444444;transform-origin:50% 0;transform:translateX(-50%);">K</div>
<div class="t" id="t73" style="left:864.50px;top:169.00px;font-size:13px;color:#444444;transform-origin:50% 0;transform:translateX(-50%);">L</div>
<div class="t" id="t74" style="left:944.50px;top:169.00px;font-size:13px;color:#444444;transform-origin:50% 0;transform:translateX(-50%);">M</div>
<div class="t" id="t75" style="left:1024.50px;top:169.00px;font-size:13px;color:#444444;transform-origin:50% 0;transform:translateX(-50%);">N</div>
<div class="t" id="t76" style="left:1104.50px;top:169.00px;font-size:13px;color:#444444;transform-origin:50% 0;transform:translateX(-50%);">O</div>
<div class="t" id="t77" style="left:1184.50px;top:169.00px;font-size:13px;color:#444444;transform-origin:50% 0;transform:translateX(-50%);">P</div>
<div class="t" id="t78" style="left:1264.50px;top:169.00px;font-size:13px;color:#444444;transform-origin:50% 0;transform:translateX(-50%);">Q</div>
<div class="t" id="t79" style="left:1344.50px;top:169.00px;font-size:13px;color:#444444;transform-origin:50% 0;transform:translateX(-50%);">R</div>
<div class="t" id="t80" style="left:1424.50px;top:169.00px;font-size:13px;color:#444444;transform-origin:50% 0;transform:translateX(-50%);">S</div>
<div class="t" id="t81" style="left:1504.50px;top:169.00px;font-size:13px;color:#444444;transform-origin:50% 0;transform:translateX(-50%);">T</div>
<div class="t" id="t82" style="left:1584.50px;top:169.00px;font-size:13px;color:#444444;transform-origin:50% 0;transform:translateX(-50%);">U</div>
<div class="t" id="t83" style="left:1664.50px;top:169.00px;font-size:13px;color:#444444;transform-origin:50% 0;transform:translateX(-50%);">V</div>
<div class="t" id="t84" style="left:1744.50px;top:169.00px;font-size:13px;color:#444444;transform-origin:50% 0;transform:translateX(-50%);">W</div>
<div class="t" id="t85" style="left:1824.50px;top:169.00px;font-size:13px;color:#444444;transform-origin:50% 0;transform:translateX(-50%);">X</div>
<div class="t" id="t86" style="left:12.00px;top:189.50px;font-size:13px;color:#444444;transform-origin:50% 0;transform:translateX(-50%);">1</div>
<div class="t" id="t87" style="left:12.00px;top:209.50px;font-size:13px;color:#444444;transform-origin:50% 0;transform:translateX(-50%);">2</div>
<div class="t" id="t88" style="left:12.00px;top:229.50px;font-size:13px;color:#444444;transform-origin:50% 0;transform:translateX(-50%);">3</div>
<div class="t" id="t89" style="left:12.00px;top:249.50px;font-size:13px;color:#444444;transform-origin:50% 0;transform:translateX(-50%);">4</div>
<div class="t" id="t90" style="left:12.00px;top:269.50px;font-size:13px;color:#444444;transform-origin:50% 0;transform:translateX(-50%);">5</div>
<div class="t" id="t91" style="left:12.00px;top:289.50px;font-size:13px;color:#444444;transform-origin:50% 0;transform:translateX(-50%);">6</div>
<div class="t" id="t92" style="left:12.00px;top:309.50px;font-size:13px;color:#444444;transform-origin:50% 0;transform:translateX(-50%);">7</div>
<div class="t" id="t93" style="left:12.00px;top:329.50px;font-size:13px;color:#107c41;transform-origin:50% 0;transform:translateX(-50%);">8</div>
<div class="t" id="t94" style="left:12.00px;top:349.50px;font-size:13px;color:#107c41;transform-origin:50% 0;transform:translateX(-50%);">9</div>
<div class="t" id="t95" style="left:12.00px;top:369.50px;font-size:13px;color:#444444;transform-origin:50% 0;transform:translateX(-50%);">10</div>
<div class="t" id="t96" style="left:12.00px;top:389.50px;font-size:13px;color:#444444;transform-origin:50% 0;transform:translateX(-50%);">11</div>
<div class="t" id="t97" style="left:12.00px;top:409.50px;font-size:13px;color:#444444;transform-origin:50% 0;transform:translateX(-50%);">12</div>
<div class="t" id="t98" style="left:12.00px;top:429.50px;font-size:13px;color:#444444;transform-origin:50% 0;transform:translateX(-50%);">13</div>
<div class="t" id="t99" style="left:12.00px;top:449.50px;font-size:13px;color:#444444;transform-origin:50% 0;transform:translateX(-50%);">14</div>
<div class="t" id="t100" style="left:12.00px;top:469.50px;font-size:13px;color:#444444;transform-origin:50% 0;transform:translateX(-50%);">15</div>
<div class="t" id="t101" style="left:12.00px;top:489.50px;font-size:13px;color:#444444;transform-origin:50% 0;transform:translateX(-50%);">16</div>
<div class="t" id="t102" style="left:12.00px;top:509.50px;font-size:13px;color:#444444;transform-origin:50% 0;transform:translateX(-50%);">17</div>
<div class="t" id="t103" style="left:12.00px;top:529.50px;font-size:13px;color:#444444;transform-origin:50% 0;transform:translateX(-50%);">18</div>
<div class="t" id="t104" style="left:12.00px;top:549.50px;font-size:13px;color:#444444;transform-origin:50% 0;transform:translateX(-50%);">19</div>
<div class="t" id="t105" style="left:12.00px;top:569.50px;font-size:13px;color:#444444;transform-origin:50% 0;transform:translateX(-50%);">20</div>
<div class="t" id="t106" style="left:12.00px;top:589.50px;font-size:13px;color:#444444;transform-origin:50% 0;transform:translateX(-50%);">21</div>
<div class="t" id="t107" style="left:12.00px;top:609.50px;font-size:13px;color:#444444;transform-origin:50% 0;transform:translateX(-50%);">22</div>
<div class="t" id="t108" style="left:12.00px;top:629.50px;font-size:13px;color:#444444;transform-origin:50% 0;transform:translateX(-50%);">23</div>
<div class="t" id="t109" style="left:12.00px;top:649.50px;font-size:13px;color:#444444;transform-origin:50% 0;transform:translateX(-50%);">24</div>
<div class="t" id="t110" style="left:12.00px;top:669.50px;font-size:13px;color:#444444;transform-origin:50% 0;transform:translateX(-50%);">25</div>
<div class="t" id="t111" style="left:12.00px;top:689.50px;font-size:13px;color:#444444;transform-origin:50% 0;transform:translateX(-50%);">26</div>
<div class="t" id="t112" style="left:12.00px;top:709.50px;font-size:13px;color:#444444;transform-origin:50% 0;transform:translateX(-50%);">27</div>
<div class="t" id="t113" style="left:12.00px;top:729.50px;font-size:13px;color:#444444;transform-origin:50% 0;transform:translateX(-50%);">28</div>
<div class="t" id="t114" style="left:12.00px;top:749.50px;font-size:13px;color:#444444;transform-origin:50% 0;transform:translateX(-50%);">29</div>
<div class="t" id="t115" style="left:12.00px;top:769.50px;font-size:13px;color:#444444;transform-origin:50% 0;transform:translateX(-50%);">30</div>
<div class="t" id="t116" style="left:12.00px;top:789.50px;font-size:13px;color:#444444;transform-origin:50% 0;transform:translateX(-50%);">31</div>
<div class="t" id="t117" style="left:12.00px;top:809.50px;font-size:13px;color:#444444;transform-origin:50% 0;transform:translateX(-50%);">32</div>
<div class="t" id="t118" style="left:12.00px;top:829.50px;font-size:13px;color:#444444;transform-origin:50% 0;transform:translateX(-50%);">33</div>
<div class="t" id="t119" style="left:12.00px;top:849.50px;font-size:13px;color:#444444;transform-origin:50% 0;transform:translateX(-50%);">34</div>
<div class="t" id="t120" style="left:12.00px;top:869.50px;font-size:13px;color:#444444;transform-origin:50% 0;transform:translateX(-50%);">35</div>
<div class="t" id="t121" style="left:12.00px;top:889.50px;font-size:13px;color:#444444;transform-origin:50% 0;transform:translateX(-50%);">36</div>
<div class="t" id="t122" style="left:12.00px;top:909.50px;font-size:13px;color:#444444;transform-origin:50% 0;transform:translateX(-50%);">37</div>
<div class="t" id="t123" style="left:187.70px;top:329.57px;font-size:13.5px;color:#000;transform:scaleX(0.9436);">Enero</div>
<div class="t" id="t124" style="left:267.50px;top:329.57px;font-size:13.5px;color:#000;transform:scaleX(0.9729);">Febrero</div>
<div class="t" id="t125" style="left:347.50px;top:329.57px;font-size:13.5px;color:#000;transform:scaleX(0.9863);">Marzo</div>
<div class="t" id="t126" style="left:261.50px;top:349.57px;font-size:13.5px;color:#000;transform-origin:100% 0;transform:translateX(-100%);">20</div>
<div class="t" id="t127" style="left:341.50px;top:349.57px;font-size:13.5px;color:#000;transform-origin:100% 0;transform:translateX(-100%);">5</div>
<div class="t" id="t128" style="left:421.50px;top:349.57px;font-size:13.5px;color:#000;transform-origin:100% 0;transform:translateX(-100%);">8</div>
<div class="t" id="t129" style="left:419.50px;top:457.46px;font-size:16px;color:#595959;transform-origin:50% 0;transform:translateX(-50%) scaleX(1.0314);">Título del gráfico</div>
<div class="t" id="t130" style="left:200.50px;top:693.11px;font-size:10.5px;color:#595959;transform-origin:100% 0;transform:translateX(-100%);">0</div>
<div class="t" id="t131" style="left:200.50px;top:652.11px;font-size:10.5px;color:#595959;transform-origin:100% 0;transform:translateX(-100%);">5</div>
<div class="t" id="t132" style="left:200.50px;top:610.11px;font-size:10.5px;color:#595959;transform-origin:100% 0;transform:translateX(-100%);">10</div>
<div class="t" id="t133" style="left:200.50px;top:569.11px;font-size:10.5px;color:#595959;transform-origin:100% 0;transform:translateX(-100%);">15</div>
<div class="t" id="t134" style="left:200.50px;top:527.11px;font-size:10.5px;color:#595959;transform-origin:100% 0;transform:translateX(-100%);">20</div>
<div class="t" id="t135" style="left:200.50px;top:485.11px;font-size:10.5px;color:#595959;transform-origin:100% 0;transform:translateX(-100%);">25</div>
<div class="t" id="t136" style="left:284.00px;top:708.11px;font-size:10.5px;color:#595959;transform-origin:50% 0;transform:translateX(-50%);">Enero</div>
<div class="t" id="t137" style="left:428.50px;top:708.11px;font-size:10.5px;color:#595959;transform-origin:50% 0;transform:translateX(-50%);">Febrero</div>
<div class="t" id="t138" style="left:573.00px;top:708.11px;font-size:10.5px;color:#595959;transform-origin:50% 0;transform:translateX(-50%);">Marzo</div>
<div class="t" id="t139" style="left:124.00px;top:940.00px;font-size:13px;color:#242424;-webkit-text-stroke:0.35px #242424;">Hoja1</div>
<div class="t" id="t140" style="left:10.00px;top:970.84px;font-size:12px;color:#242424;transform:scaleX(0.9267);">Listo</div>
<div class="t" id="t141" style="left:72.00px;top:970.34px;font-size:12px;color:#242424;transform:scaleX(0.9577);-webkit-text-stroke:0.3px #242424;">Accesibilidad: es necesario investigar</div>
<div class="t" id="t142" style="left:1394.00px;top:971.04px;font-size:12px;color:#242424;transform:scaleX(0.9364);">Promedio: 11</div>
<div class="t" id="t143" style="left:1478.00px;top:970.54px;font-size:12px;color:#242424;transform:scaleX(0.9425);">Recuento: 6</div>
<div class="t" id="t144" style="left:1554.00px;top:971.04px;font-size:12px;color:#242424;transform:scaleX(0.8954);">Suma: 33</div>
<div class="t" id="t145" style="left:1884.00px;top:971.27px;font-size:11.5px;color:#242424;transform:scaleX(0.8837);">100%</div>
</body></html>
